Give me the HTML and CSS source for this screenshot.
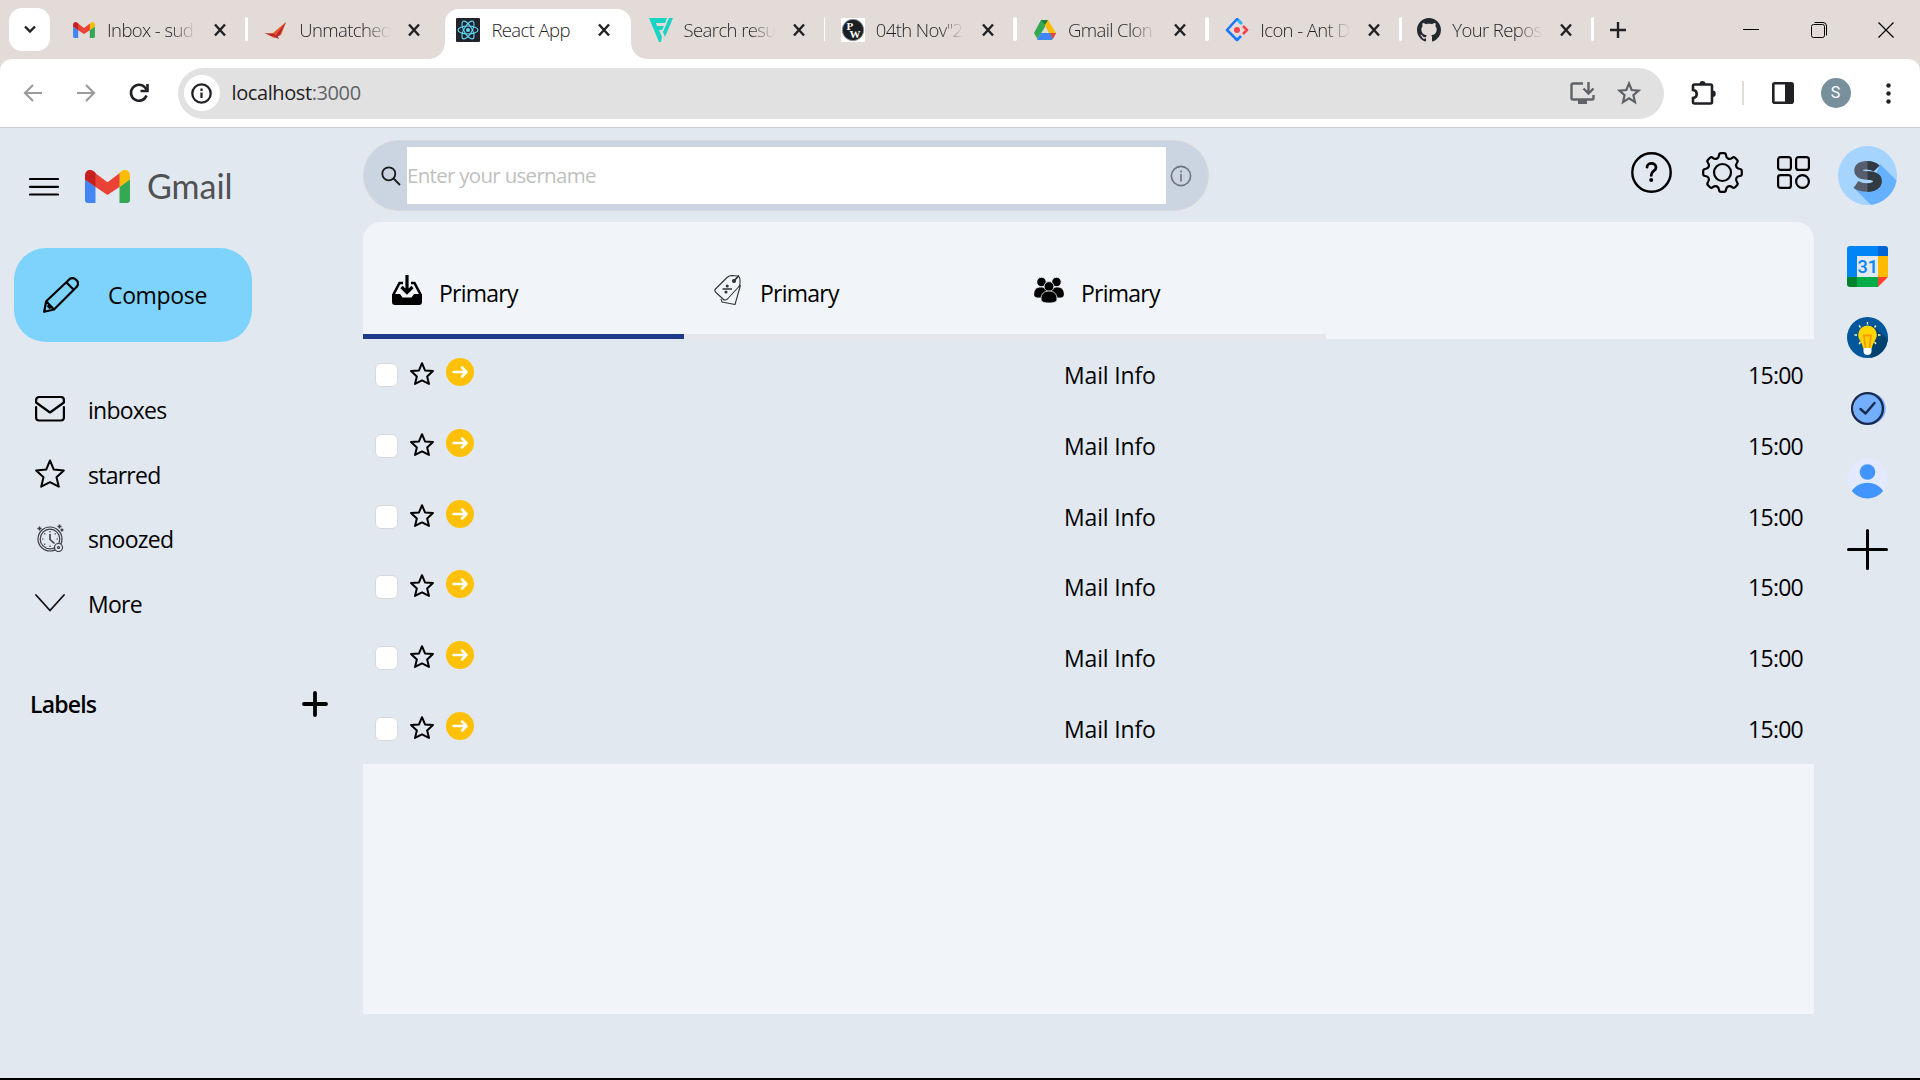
FILE: index.html
```html
<!DOCTYPE html>
<html lang="en">
<head>
<meta charset="utf-8">
<title>React App</title>
<link rel="stylesheet" href="styles.css">
</head>
<body>
<svg class="defs" width="0" height="0">
  <symbol id="x" viewBox="0 0 14 14"><path d="M2 1.5 12 12.5M12 1.5 2 12.5" stroke="#1f2124" stroke-width="2.4" fill="none"/></symbol>
  <symbol id="gm" viewBox="0 0 45 33"><path fill="#4285f4" d="M0 9v20.500a3 3 0 0 0 3 3.500h7.500V17z"/><path fill="#34a853" d="M45 9v20.500a3 3 0 0 1-3 3.500h-7.500V17z"/><path fill="#ea4335" d="M9.500 2.500 22.500 12.300 35.500 2.500V16.300L22.500 25 9.500 16.300z"/><path fill="#c5221f" d="M0 5.500C0 .5 5-1.500 9 1.500l1.500 1.300V17L0 9.500z"/><path fill="#fbbc04" d="M45 5.500C45 .5 40-1.500 36 1.500l-1.500 1.300V17L45 9.500z"/></symbol>
  <symbol id="star" viewBox="0 0 30 29"><path d="M15 1.500 18.800 10.600 28.800 11.400 21.500 18.300 23.800 27.700 15 23.200 6.200 27.700 8.500 18.300 1.200 11.400 11.200 10.600z" fill="none" stroke="#000" stroke-width="var(--sw)" stroke-linejoin="round"/></symbol>
  <symbol id="go" viewBox="0 0 28 28"><circle cx="14" cy="14" r="14" fill="#ffc107"/><path d="M7.500 14H20M16 9.500 20.500 14 16 18.500" fill="none" stroke="#fff" stroke-width="2.500" stroke-linecap="round" stroke-linejoin="round"/></symbol>
</svg>

<header class="tabstrip">
  <span class="tabsearch"><svg width="12" height="9" viewBox="0 0 12 9"><path d="m1 1.500 5 5 5-5" fill="none" stroke="#1f2124" stroke-width="2.400"/></svg></span>
  <div class="tab"><svg class="fav" viewBox="0 0 24 24"><use href="#gm" x="1" y="4" width="22" height="16"/></svg><span class="t fade">Inbox - sud</span><svg class="close"><use href="#x"/></svg><i></i></div>
  <div class="tab"><svg class="fav" viewBox="0 0 24 24"><path fill="#e4572e" d="M22 4 17 17l-7 3-7-4 6-1z"/><path fill="#b3262a" d="m22 4-7 14-3-1zM0 15l11 1-1 3zM8 18l7 3-2-4z"/></svg><span class="t fade">Unmatched</span><svg class="close"><use href="#x"/></svg><i class="off"></i></div>
  <div class="tab active"><svg class="fav" viewBox="0 0 24 24"><rect width="24" height="24" rx="1" fill="#20232a"/><g fill="none" stroke="#61dafb" stroke-width="1.100"><ellipse cx="12" cy="12" rx="10" ry="4"/><ellipse cx="12" cy="12" rx="10" ry="4" transform="rotate(60 12 12)"/><ellipse cx="12" cy="12" rx="10" ry="4" transform="rotate(120 12 12)"/></g><circle cx="12" cy="12" r="2" fill="#61dafb"/></svg><span class="t">React App</span><svg class="close"><use href="#x"/></svg><i class="off"></i></div>
  <div class="tab"><svg class="fav" viewBox="0 0 24 24"><path fill="#19d3c5" d="M0 0h18l-2 5H7l1 3h7l-2 4h-3l3 7-1 5h-2zM20 0h4L16 19l-2-5z"/></svg><span class="t fade">Search resu</span><svg class="close"><use href="#x"/></svg><i></i></div>
  <div class="tab"><svg class="fav" viewBox="0 0 24 24"><path fill="#fff" d="M0 0h24v24H0z"/><circle cx="12" cy="12" r="10.700" fill="#1b1f23" stroke="#8a8f94"/><text x="5.500" y="12" class="pw">P</text><text x="8.500" y="20" class="pw">W</text></svg><span class="t fade">04th Nov"2</span><svg class="close"><use href="#x"/></svg><i></i></div>
  <div class="tab"><svg class="fav" viewBox="0 0 24 24"><path fill="#34a853" d="M8 2h4l0 7-7.500 12L1 15z"/><path fill="#fbbc04" d="M9 2h6l8 13h-7z"/><path fill="#4285f4" d="M4 22l4-7h15l-4 7z"/><path fill="#ea4335" d="M17 15h6l-3 6z"/><path fill="#188038" d="M8 2h7l-3 5z"/></svg><span class="t fade">Gmail Clon</span><svg class="close"><use href="#x"/></svg><i></i></div>
  <div class="tab"><svg class="fav" viewBox="0 0 24 24"><path d="m16 5-4-4L2 12l10 10 4-4" fill="none" stroke="#1677ff" stroke-width="2.600" stroke-linejoin="round"/><path d="m13 2 4 4" stroke="#29b6ff" stroke-width="2.600"/><path d="m18 8 4 4-4 4" fill="none" stroke="#f5424e" stroke-width="2.600" stroke-linejoin="round"/><circle cx="12" cy="12" r="3" fill="#f5424e"/></svg><span class="t fade">Icon - Ant D</span><svg class="close"><use href="#x"/></svg><i></i></div>
  <div class="tab"><svg class="fav" viewBox="0 0 16 16"><path fill="#24292f" d="M8 0C3.580 0 0 3.580 0 8c0 3.540 2.290 6.530 5.470 7.590.4.070.55-.17.55-.38 0-.19-.01-.82-.01-1.490-2.010.37-2.530-.49-2.690-.94-.09-.23-.48-.94-.82-1.130-.28-.15-.68-.52-.01-.53.63-.01 1.080.58 1.230.82.72 1.210 1.870.87 2.330.66.07-.52.28-.87.51-1.070-1.780-.2-3.640-.89-3.640-3.950 0-.87.31-1.590.82-2.150-.08-.2-.36-1.020.08-2.120 0 0 .67-.21 2.200.82.64-.18 1.320-.27 2-.27s1.360.09 2 .27c1.530-1.040 2.200-.82 2.200-.82.44 1.100.16 1.920.08 2.120.51.56.82 1.270.82 2.150 0 3.070-1.870 3.750-3.650 3.950.29.25.54.73.54 1.480 0 1.070-.01 1.930-.01 2.200 0 .21.15.46.55.38A8.010 8.010 0 0 0 16 8c0-4.420-3.580-8-8-8z"/></svg><span class="t fade">Your Repos</span><svg class="close"><use href="#x"/></svg><i></i></div>
  <svg class="newtab" width="16" height="16" viewBox="0 0 16 16"><path d="M8 0v16M0 8h16" stroke="#1f2124" stroke-width="2.400"/></svg>
  <div class="win">
    <svg width="16" height="16"><path d="M0 7.500h16" stroke="#000"/></svg>
    <svg width="16" height="16" fill="none" stroke="#000"><rect x=".5" y="2.500" width="13" height="13" rx="2"/><path d="M3.500.5H12a3.500 3.500 0 0 1 3.500 3.500v9.500"/></svg>
    <svg width="16" height="16"><path d="m.5.5 15 15m0-15-15 15" stroke="#000" stroke-width="1.200"/></svg>
  </div>
</header>

<div class="toolbar">
  <div class="navbtns">
    <svg width="20" height="20" fill="none" stroke="#9b9b9b" stroke-width="2.200"><path d="M19 10H2.500M10 2 2 10l8 8"/></svg>
    <svg width="20" height="20" fill="none" stroke="#9b9b9b" stroke-width="2.200"><path d="M1 10h16.500M10 2l8 8-8 8"/></svg>
    <svg width="20" height="20" fill="none" stroke="#1f2124" stroke-width="2.600"><path d="M17.500 12.500A8 8 0 1 1 16 4.500l2 2.500"/><path d="M18.500 1v7H11.500"/></svg>
  </div>
  <div class="url">
    <span class="site"><svg width="21" height="21" viewBox="0 0 21 21"><circle cx="10.500" cy="10.500" r="9.200" fill="none" stroke="#1f2124" stroke-width="2.300"/><path d="M10.500 9.500V15M10.500 5.500V8" stroke="#1f2124" stroke-width="2.200"/></svg></span>
    <span class="host">localhost<em>:3000</em></span>
    <svg class="inst" width="25" height="23" viewBox="0 0 25 23" fill="none" stroke="#5f6368" stroke-width="2.400"><path d="M13 1.500H3a1.500 1.500 0 0 0-1.500 1.500v13a1.500 1.500 0 0 0 1.500 1.500h19a1.500 1.500 0 0 0 1.500-1.500V13M18.500 0v11M13.500 6.500l5 5 5-5"/><path d="M8 18h9v4H8z" fill="#5f6368" stroke="none"/></svg>
    <svg width="24" height="24" viewBox="0 0 24 24"><path d="M12 2.500 14.700 9l7 .6-5.300 4.600 1.600 6.900L12 17.400l-6 3.700 1.600-6.900L2.300 9.600l7-.6z" fill="none" stroke="#5f6368" stroke-width="2.200"/></svg>
  </div>
  <div class="ext">
    <svg width="26" height="26" viewBox="0 0 26 26"><path d="M3.500 4.500h16a1.500 1.500 0 0 1 1.500 1.500v16a1.500 1.500 0 0 1-1.500 1.500h-16A1.500 1.500 0 0 1 2 22v-4c5-.5 5-7.500 0-8V6a1.500 1.500 0 0 1 1.500-1.500z" fill="none" stroke="#1f2124" stroke-width="2.600"/><path d="M8.500 4a3 3 0 0 1 6 0zM21.500 10.500a3.200 3.200 0 0 1 0 6.500z" fill="#1f2124"/></svg>
    <b></b>
    <svg width="22" height="22"><rect x="1.300" y="1.300" width="19.400" height="19.400" rx="1.500" fill="none" stroke="#1f2124" stroke-width="2.600"/><path d="M13 1h8v20h-8z" fill="#1f2124"/></svg>
    <span class="me">S</span>
    <svg class="dots" width="5" height="21" fill="#1f2124"><circle cx="2.500" cy="2.500" r="2.200"/><circle cx="2.500" cy="10.500" r="2.200"/><circle cx="2.500" cy="18.500" r="2.200"/></svg>
  </div>
</div>

<div class="app">
  <aside class="side">
    <div class="brand">
      <svg width="30" height="19" stroke="#000" stroke-width="2.200" stroke-linecap="round"><path d="M1 2h28M1 9.800h28M1 17.500h28"/></svg>
      <svg class="logo" width="45" height="33"><use href="#gm"/></svg>
      <span class="word">Gmail</span>
    </div>
    <button class="compose">
      <svg width="36" height="36" viewBox="0 0 36 36" fill="none" stroke="#000" stroke-width="2.200" stroke-linejoin="round"><path d="m1.200 34.800 2-10.500L26.500 2.200c4-3.500 11 2.500 7.500 7.300L11 32.500zM23.500 5.500l7.200 7.200M3.200 24.300l7.800 8.200M4.500 28.500l3 3"/></svg>
      <span>Compose</span>
    </button>
    <nav class="folders">
      <a><svg width="30" height="26" viewBox="0 0 30 26" fill="none" stroke="#000" stroke-width="2.200" stroke-linecap="round" stroke-linejoin="round"><path d="M1.100 6.500V4a3 3 0 0 1 3-3h21.800a3 3 0 0 1 3 3v2.500L15 16.500zM1.100 11v10.500a3 3 0 0 0 3 3h21.800a3 3 0 0 0 3-3V11"/></svg><span>inboxes</span></a>
      <a><svg class="s30" width="30" height="29"><use href="#star"/></svg><span>starred</span></a>
      <a><svg width="30" height="28" viewBox="0 0 30 28" fill="none" stroke="#3a3d42" stroke-width="1.200"><circle cx="15" cy="15" r="12"/><circle cx="15" cy="15" r="9.800"/><path d="M15 10v5.500l4.500 4" stroke-width="1.600"/><path d="M15 7v1.500M15 21.500V23M7 15h1.500M21.500 15H23M9.300 9.300l1 1M20.700 9.300l-1 1M9.300 20.700l1-1"/><circle cx="23.500" cy="23.500" r="4" fill="#e2e8f0"/><circle cx="23.500" cy="23.500" r="1"/><path d="M4.500 2.500v4M2.500 4.500h4M24.500.5v4M22.500 2.500h4M27 4.500v3M25.500 6h3" stroke-width="1.500"/></svg><span>snoozed</span></a>
      <a><svg width="30" height="18" viewBox="0 0 30 18" fill="none" stroke="#111" stroke-width="1.800" stroke-linecap="round" stroke-linejoin="round"><path d="m1 1 14 15.500L29 1"/></svg><span>More</span></a>
    </nav>
    <div class="labels"><span>Labels</span><svg width="26" height="26"><path d="M13 2v22M2 13h22" stroke="#000" stroke-width="3.800" stroke-linecap="round"/></svg></div>
  </aside>

  <main class="main">
    <div class="top">
      <div class="search">
        <svg width="20" height="20" fill="none" stroke="#1c1c1c" stroke-width="1.800"><circle cx="7.800" cy="7.800" r="6.500"/><path d="m12.500 12.500 6.500 6.500"/></svg>
        <div class="input">Enter your username</div>
        <svg width="22" height="22" fill="none" stroke="#6d737b" stroke-width="1.600"><circle cx="11" cy="11" r="9.600"/><path d="M11 9v7.500M11 5.500v2"/></svg>
      </div>
      <div class="tools">
        <svg width="41" height="41" viewBox="0 0 41 41" fill="none" stroke="#000" stroke-width="2.400" stroke-linecap="round"><circle cx="20.500" cy="20.500" r="19.200"/><path d="M16 15.200c.3-5 9-5 9 .2 0 4-4.800 3.200-4.800 8" stroke-width="2.800"/><circle cx="20.200" cy="28" r="1" fill="#000" stroke-width="2"/></svg>
        <svg width="41" height="41" viewBox="0 0 41 41" fill="none" stroke="#000" stroke-width="2.200" stroke-linejoin="round"><circle cx="20.500" cy="20.500" r="8.500"/><path d="M17 3.200Q17.200 1.200 19 1.200h3Q23.800 1.200 24 3.200c.2 3.500 3.500 4.800 6.200 2.600q1.500-1.200 2.800 0l2 2q1.300 1.300.1 2.800c-2.200 2.900-.8 6.100 2.700 6.400q2 .2 2 2v3q0 1.800-2 2c-3.500.3-4.900 3.400-2.700 6.400q1.200 1.500-.1 2.800l-2 2q-1.300 1.200-2.800 0c-2.700-2.200-6-.9-6.200 2.600q-.2 2-2 2h-3q-1.800 0-2-2c-.2-3.500-3.500-4.800-6.200-2.600q-1.500 1.200-2.800 0l-2-2q-1.300-1.300-.1-2.800c2.200-3 .8-6.100-2.700-6.400q-2-.2-2-2v-3q0-1.800 2-2c3.500-.3 4.900-3.500 2.700-6.400q-1.200-1.500.1-2.800l2-2q1.300-1.200 2.800 0C13.500 8 16.800 6.700 17 3.200z"/></svg>
        <svg width="41" height="41" viewBox="0 0 41 41" fill="none" stroke="#000" stroke-width="2.200"><rect x="5.100" y="5.100" width="12.800" height="12.800" rx="2.500"/><rect x="23.100" y="5.100" width="12.800" height="12.800" rx="2.500"/><rect x="5.100" y="23.100" width="12.800" height="12.800" rx="2.500"/><circle cx="29.500" cy="29.500" r="6.400"/></svg>
      </div>
    </div>
    <section class="panel">
      <div class="cats">
        <div class="cat on"><svg width="30" height="30" viewBox="0 0 30 30"><path d="M0 19h8l2.500 3.500h9L22 19h8v8a3 3 0 0 1-3 3H3a3 3 0 0 1-3-3z"/><path d="M1.200 20 7.500 8h3.500M28.800 20 22.500 8H19" fill="none" stroke="#000" stroke-width="2.600"/><path d="M15 0v17M9.500 12l5.500 5.500 5.500-5.500" fill="none" stroke="#000" stroke-width="3.200"/></svg><span>Primary</span></div>
        <div class="cat"><svg width="30" height="30" viewBox="0 0 30 30" fill="none" stroke="#333" stroke-width="1.100" stroke-linejoin="round"><path d="M2.500 14 14 2.500q2-2 5-2l5 .5q3 .5 3 4v3.500q0 2-1.500 3.500L14.500 24q-2.500 2-4.500 0l-7-6.500q-2-2-.5-3.500zM8 24l1 3 13 2.500L27.500 10"/><path d="m26 .5-6 6.500M9.500 14H19" stroke-width="1.600"/><circle cx="21" cy="6" r="1.500" fill="#333"/><circle cx="14.200" cy="11" r="1" fill="#333"/><circle cx="13" cy="17" r="1" fill="#333"/></svg><span>Primary</span></div>
        <div class="cat"><svg width="30" height="30" viewBox="0 0 30 30" stroke="#f1f5f9" stroke-width=".8"><circle cx="7.500" cy="7" r="4.700"/><circle cx="22.500" cy="7" r="4.700"/><path d="M-.3 20c0-5 2-8 7.500-8 4 0 7 3 7 6v5H3Q-.3 22.500-.3 20zM30.300 20c0-5-2-8-7.500-8-4 0-7 3-7 6v5H27Q30.300 22.500 30.300 20z"/><circle cx="15" cy="11.500" r="4.900"/><path d="M7 24c0-5 3-8 8-8s8 3 8 8c0 3-2.500 4-8 4s-8-1-8-4z"/></svg><span>Primary</span></div>
      </div>
      <div class="list">
        <div class="row"><span class="box"></span><svg class="st"><use href="#star"/></svg><svg class="go"><use href="#go"/></svg><span class="info">Mail Info</span><time>15:00</time></div>
        <div class="row"><span class="box"></span><svg class="st"><use href="#star"/></svg><svg class="go"><use href="#go"/></svg><span class="info">Mail Info</span><time>15:00</time></div>
        <div class="row"><span class="box"></span><svg class="st"><use href="#star"/></svg><svg class="go"><use href="#go"/></svg><span class="info">Mail Info</span><time>15:00</time></div>
        <div class="row"><span class="box"></span><svg class="st"><use href="#star"/></svg><svg class="go"><use href="#go"/></svg><span class="info">Mail Info</span><time>15:00</time></div>
        <div class="row"><span class="box"></span><svg class="st"><use href="#star"/></svg><svg class="go"><use href="#go"/></svg><span class="info">Mail Info</span><time>15:00</time></div>
        <div class="row"><span class="box"></span><svg class="st"><use href="#star"/></svg><svg class="go"><use href="#go"/></svg><span class="info">Mail Info</span><time>15:00</time></div>
      </div>
    </section>
  </main>

  <aside class="rail">
    <svg class="avatar" width="59" height="59" viewBox="0 0 59 59"><defs><clipPath id="c"><circle cx="29.500" cy="29.500" r="29.500"/></clipPath><clipPath id="h"><path d="M29.500 0H59v59H29.500z"/></clipPath></defs><g clip-path="url(#c)"><path fill="#a4d4ff" d="M0 0h59v59H0z"/><path fill="#65b0ff" d="M42 18 62 38 62 62H36L15 41l20-5z"/></g><g fill="none" stroke-width="8.500"><path stroke="#565d6b" d="M38.500 22.500C34 18 20.500 17.500 20.500 24.500 20.500 33 39.500 26 39.500 35 39.500 43.500 24 42.500 18 38.500"/><path stroke="#323b44" clip-path="url(#h)" d="M38.500 22.500C34 18 20.500 17.500 20.500 24.500 20.500 33 39.500 26 39.500 35 39.500 43.500 24 42.500 18 38.500"/></g></svg>
    <svg width="41" height="41" viewBox="0 0 41 41"><path fill="#0085f7" d="M3 0h28v10H10v21H0V3a3 3 0 0 1 3-3z"/><path fill="#0066d6" d="M31 0h7a3 3 0 0 1 3 3v7H31z"/><path fill="#ffba00" d="M31 10h10v21H31z"/><path fill="#00ac47" d="M10 31h21v10H10z"/><path fill="#00832d" d="M0 31h10v10H3a3 3 0 0 1-3-3z"/><path fill="#ff4131" d="M31 31h10L31 41z"/><text x="20.800" y="27" text-anchor="middle" class="cal">31</text></svg>
    <svg width="41" height="41" viewBox="0 0 41 41"><circle cx="20.500" cy="20.500" r="20.500" fill="#01579b"/><path fill="#00426f" d="M26 9 40.800 22A20.500 20.500 0 0 1 24 40.700L20 36z"/><path fill="#ffd600" d="M20.500 8.500a9.300 9.300 0 0 1 9.300 9.300c0 5-4.300 8-4.800 13.200h-9c-.5-5.200-4.800-8.200-4.800-13.200a9.300 9.300 0 0 1 9.300-9.300z"/><path d="M18.500 31 17 18.500h7L22.500 31" fill="none" stroke="#ff9800" stroke-width="1.800"/><path fill="#fff" d="M16.500 31h8v3a4 4 0 0 1-8 0z"/><path d="M20.500 5v2.500M12 8.500l1.500 2M29 8.500l-1.500 2M7.500 18h2.500M31 18h2.500M12 27l1.500-2M29 27l-1.500-2" stroke="#fff9c4" stroke-width="1.300"/></svg>
    <svg width="41" height="41" viewBox="0 0 41 41"><circle cx="22.700" cy="20.500" r="16" fill="#74aeff"/><circle cx="20.500" cy="20.500" r="15.400" fill="none" stroke="#17294d" stroke-width="2.300"/><path d="m13.500 21 5 4.500 9-10.500" fill="none" stroke="#17294d" stroke-width="2.400" stroke-linecap="round" stroke-linejoin="round"/></svg>
    <svg width="41" height="41" viewBox="0 0 41 41"><circle cx="20.500" cy="20.500" r="20" fill="#e3e9ff"/><circle cx="20.500" cy="14" r="7.800" fill="#4294ff"/><path fill="#4294ff" d="M4.800 33C12 22 29 22 36.200 33A20 20 0 0 1 4.800 33z"/></svg>
    <svg width="41" height="41"><path d="M20.500 1.500v38M1.500 20.500h38" stroke="#000" stroke-width="3" stroke-linecap="round"/></svg>
  </aside>
</div>
</body>
</html>
```

FILE: styles.css
```css
* { box-sizing: border-box; }
html { background: #000; }
body { margin: 0; width: 1920px; height: 1080px; overflow: hidden; background: #000; color: #000; font-family: "Open Sans", "Noto Sans", sans-serif; font-weight: 400; font-size: 23px; line-height: 36px; letter-spacing: -.75px; }
svg { display: block; flex: none; }
.defs { position: absolute; }

/* browser chrome */
.tabstrip { display: flex; height: 69px; padding: 0 26px 10px 9px; background: #e3dbd8; }
.tabsearch { width: 41px; height: 43px; margin: 8px 10px 0 0; border-radius: 13px; background: #fff; display: flex; align-items: center; justify-content: center; flex: none; }
.tab { position: relative; flex: none; width: 192.200px; height: 50px; margin-top: 9px; padding: 0 3.800px 10px 12px; display: flex; align-items: center; font-size: 18.500px; letter-spacing: -.6px; font-weight: 300; color: #1f2124; }
.fav { width: 24px; height: 24px; margin-top: 2px; }
.t { width: 91px; margin: 1px 0 0 11px; white-space: nowrap; line-height: 26px; }
.fade { -webkit-mask-image: linear-gradient(90deg, #000 72%, transparent); mask-image: linear-gradient(90deg, #000 72%, transparent); }
.close { width: 14px; height: 14px; margin-left: 17px; margin-top: 1px; }
.tab i { width: 4px; height: 24px; margin-left: 18px; border-radius: 2px; background: #fff; }
.tab i.off { background: transparent; }
.tab.active::before { content: ""; position: absolute; inset: 0 6px 0 1px; z-index: 0; border-radius: 14px 14px 0 0; background: #fff; }
.tab.active::after { content: ""; position: absolute; left: -15px; right: -10px; bottom: 0; height: 16px; background: radial-gradient(circle at 0 0, transparent 15.500px, #fff 16px) left / 16px 16px no-repeat, radial-gradient(circle at 100% 0, transparent 15.500px, #fff 16px) right / 16px 16px no-repeat; }
.tab.active > * { z-index: 1; }
.newtab { margin: 22px 0 0 12px; }
.win { display: flex; gap: 51.500px; margin: 22px 0 0 auto; }
.pw { font: bold 11px "Liberation Serif", serif; fill: #fff; }

.toolbar { display: flex; align-items: center; height: 69px; margin-top: -10px; padding: 0 29px 0 23px; background: #fff; border-bottom: 1px solid #c9cdd2; border-radius: 12px 12px 0 0; position: relative; }
.navbtns { display: flex; gap: 33px; }
.url { display: flex; align-items: center; width: 1486px; height: 51px; margin-left: 28.500px; padding: 0 23px 0 6px; border-radius: 26px; background: #e1e1e1; }
.site { width: 36px; height: 36px; border-radius: 50%; background: #fff; display: flex; align-items: center; justify-content: center; }
.host { margin: -1px 0 0 12px; font-size: 20px; letter-spacing: -.4px; color: #1f2124; }
.host em { font-style: normal; color: #5f6368; }
.inst { margin: 0 22px 0 auto; }
.ext { display: flex; align-items: center; margin-left: 27px; flex: 1; }
.ext b { width: 2px; height: 24px; margin: 0 28px 0 25px; background: #e3dbd8; }
.me { width: 30px; height: 30px; margin-left: 27px; border-radius: 50%; background: #78909c; color: #fff; font: 16px/30px Roboto, sans-serif; text-align: center; letter-spacing: 0; }
.dots { margin-left: auto; }

/* mail client */
.app { display: flex; height: 950px; background: #e2e8f0; }
.side { width: 363px; flex: none; }
.brand { display: flex; align-items: center; height: 34px; margin: 41px 0 0 29px; }
.logo { margin-left: 26px; }
.word { margin-left: 17px; font-family: Lato, sans-serif; font-size: 34px; letter-spacing: 0; color: #4f5152; }
.compose { display: flex; align-items: center; width: 238px; height: 94px; margin: 45px 0 0 14px; padding: 0 0 0 29px; gap: 29px; border: 0; border-radius: 32px; background: #7dd3fc; color: #000; font: inherit; letter-spacing: -.35px; }
.folders { margin: 35px 0 0 35px; }
.folders a { display: flex; align-items: center; height: 64.600px; gap: 23px; }
.folders span { padding-top: 2px; }
.s30 { --sw: 2; }
.labels { display: flex; justify-content: space-between; align-items: center; height: 36px; margin: 50.500px 35px 0 30px; font-weight: 600; letter-spacing: -.800px; }

.main { width: 1451px; flex: none; }
.top { display: flex; justify-content: space-between; height: 94px; padding-top: 12px; }
.search { display: flex; align-items: center; width: 846px; height: 71px; padding-left: 17px; border: 1px solid #d9d9d9; border-radius: 36px; background: #cbd5e1; }
.input { width: 759px; height: 57px; margin: 0 4px 0 6px; background: #fff; color: #bfbfbf; font-size: 20.500px; letter-spacing: -.7px; line-height: 57px; }
.tools { display: flex; gap: 30px; padding-top: 12px; }
.panel { height: 792px; border-radius: 18px 18px 0 0; background: #f1f5f9; }
.cats { display: flex; height: 117px; }
.cat { display: flex; width: 321px; padding: 53px 0 0 29px; gap: 17px; border-bottom: 5px solid #e5e7eb; }
.cat.on { border-color: #1e3a8a; }
.list { height: 425px; background: #e2e8f0; }
.row { display: flex; align-items: flex-start; height: 70.800px; padding: 0 11px 0 12px; }
.box { width: 23px; height: 24px; margin-top: 24px; border: 1px solid #d9d9d9; border-radius: 6px; background: #fff; }
.st { --sw: 2.500; width: 24px; height: 23px; margin: 23px 0 0 11.500px; }
.go { width: 28px; height: 28px; margin: 19px 0 0 12px; }
.info { margin: 18px 0 0 590.500px; letter-spacing: -.15px; }
.row time { margin: 18px 0 0 auto; }

.rail { display: flex; flex-direction: column; align-items: center; gap: 29.850px; width: 107px; padding-top: 18px; }
.avatar { margin-bottom: 11px; }
.cal { font: 500 18px Roboto, sans-serif; letter-spacing: 0; fill: #0085f7; }
```
